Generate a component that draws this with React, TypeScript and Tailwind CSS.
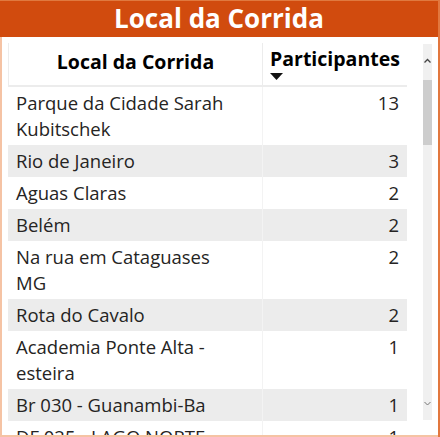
import React from 'react';

type Row = { place: string; count: number };

const rows: Row[] = [
  { place: 'Parque da Cidade Sarah Kubitschek', count: 13 },
  { place: 'Rio de Janeiro', count: 3 },
  { place: 'Aguas Claras', count: 2 },
  { place: 'Belém', count: 2 },
  { place: 'Na rua em Cataguases MG', count: 2 },
  { place: 'Rota do Cavalo', count: 2 },
  { place: 'Academia Ponte Alta - esteira', count: 1 },
  { place: 'Br 030 - Guanambi-Ba', count: 1 },
  { place: 'DF 025 - LAGO NORTE', count: 1 },
];

const font = { fontFamily: '"Open Sans", "Noto Sans", sans-serif' };

export default function App() {
  return (
    <div
      className="w-[440px] h-[437px] bg-white flex flex-col border-r-2 border-[#e2773e] overflow-hidden"
      style={font}
    >
      {/* title bar */}
      <div className="h-[37px] shrink-0 bg-[#d14b0e] border-t border-[#e0793f] flex items-center justify-center">
        <span className="text-white font-bold text-[26px] leading-none pb-[2px]">Local da Corrida</span>
      </div>

      <div className="flex-1 min-h-0 flex border-l-2 border-b-2 border-[#f5c3a4] pl-[6px] pt-[6px]">
        {/* table */}
        <div className="w-[399px] min-h-0 overflow-hidden">
          <div className="flex h-[44px] border-l border-[#ececec] border-b-2 border-[#a3c8ef] text-black font-bold text-[19.5px]">
            <div className="w-[253px] flex items-center justify-center pb-[4px]">Local da Corrida</div>
            <div className="flex-1 border-l border-[#ececec] pl-[7px] pt-[3px] flex flex-col">
              <span className="leading-[26px]">Participantes</span>
              <svg width="13" height="7" viewBox="0 0 13 7" className="mt-[1px]">
                <path d="M0 0 H13 L6.5 7 Z" fill="#111" />
              </svg>
            </div>
          </div>
          {rows.map((r, i) => (
            <div
              key={r.place}
              className={`flex text-[18.5px] leading-[26px] text-[#252423] ${i % 2 === 1 ? 'bg-[#ececec]' : 'bg-white'}`}
            >
              <div className="w-[254px] pl-[8px] pr-[20px] py-[3px]">{r.place}</div>
              <div className="flex-1 border-l border-[#f3f3f3] pr-[8px] py-[3px] text-right">{r.count}</div>
            </div>
          ))}
        </div>

        {/* scrollbar */}
        <div className="ml-[16px] w-[9px] h-[376px] mt-[1px] bg-[#f0f0f0] flex flex-col items-center">
          <svg width="9" height="36" viewBox="0 0 9 36">
            <path d="M1.5 18.5 L4.5 15.5 L7.5 18.5" fill="none" stroke="#444" strokeWidth="1.3" />
          </svg>
          <div className="w-[9px] h-[65px] bg-[#cdcdcd]" />
          <div className="flex-1" />
          <svg width="9" height="30" viewBox="0 0 9 30">
            <path d="M1.5 12 L4.5 15 L7.5 12" fill="none" stroke="#777" strokeWidth="1" />
          </svg>
        </div>
      </div>
    </div>
  );
}
